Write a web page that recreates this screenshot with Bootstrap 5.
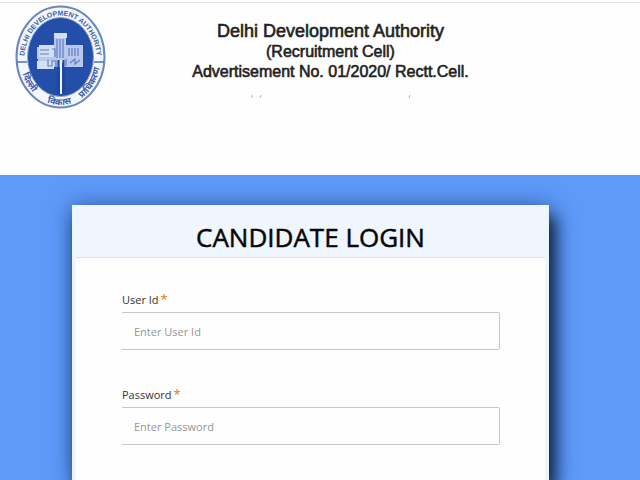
<!DOCTYPE html>
<html lang="en">
<head>
<meta charset="utf-8">
<meta name="viewport" content="width=device-width, initial-scale=1">
<title>Candidate Login</title>
<link href="https://cdn.jsdelivr.net/npm/bootstrap@5.3.0/dist/css/bootstrap.min.css" rel="stylesheet">
<style>
  body { font-family: "Open Sans", "Noto Sans", sans-serif; background: #fefefe; }
  .site-head { min-height: 173px; border-top: 1px solid #e2e4e2; margin-top: 2px; padding: 2px 85px 0 14px; }
  .emblem { width: 92px; height: 104px; }
  .org { font-family: "Liberation Sans", Arial, sans-serif; color: #222; padding-top: 15px; -webkit-text-stroke: 0.6px #222; }
  .org h1, .org h2, .org p { font-weight: 400; font-size: 16px; line-height: 20px; }
  .org h1 { font-size: 18px; line-height: 22px; }
  .ticks { width: 160px; height: 4px; margin-top: 13px; }
  .stage { background: #5e9af8; padding: 30px 91px 0 72px; min-height: calc(100vh - 175px); overflow: hidden; }
  .panel { background: #fefefe; border: solid #eaf7ff; border-width: 0 4px; min-height: 275px;
    box-shadow: 6px 12px 16px 0 #0d1d3c, 0 0 22px rgba(30, 70, 140, .6); }
  .panel-title { background: #eff6fe; border-bottom: 1px solid #dbe3ee; height: 53px; }
  .panel-title h2 { font-size: 26px; line-height: 38px; font-weight: 400; color: #080808; padding-top: 13px; -webkit-text-stroke: 0.5px #080808; }
  .fields { padding: 32px 45px 0 46px; }
  .fields label { font-size: 11px; line-height: 18px; color: #333; margin-bottom: 3px; }
  .star { color: #ec8a45; font-size: 13px; font-weight: 600; margin-left: 2px; }
  .fields .form-control { height: 38px; border: 1px solid #c9c6c7; border-left: 0; border-radius: 0 2px 2px 0;
    padding: 6px 12px; font-size: 11px; background: #fefefe; }
  .fields .form-control::placeholder { color: #969696; }
  .field + .field { margin-top: 35px; }
</style>
<script src="https://cdn.jsdelivr.net/npm/bootstrap@5.3.0/dist/js/bootstrap.bundle.min.js" defer></script>
</head>
<body>
<header class="site-head d-flex align-items-start">
  <svg class="emblem flex-shrink-0" viewBox="0 0 92 104" role="img" aria-label="Delhi Development Authority emblem">
    <defs>
      <path id="arcTop" d="M10 56A36.500 45.500 0 0 1 83 56"/>
      <path id="arcBottom" d="M6.500 54A40 46 0 0 0 86.500 54"/>
    </defs>
    <ellipse cx="46.500" cy="52" rx="44" ry="50.500" fill="#f3f6fd" stroke="#6a86be" stroke-width="2"/>
    <ellipse cx="46.500" cy="52" rx="33" ry="39.500" fill="#234fa8" stroke="#8ea5d5" stroke-width="1"/>
    <path d="M3 57h10M80 57h10" stroke="#5273b5" stroke-width="1.500"/>
    <g fill="#b9c8ea">
      <path d="M40 29h12v11h17v22H49v-4H46v4H24V54h-1V42h17z"/>
      <path d="M25 40h15v12H25zM23 56h17v8H23zM40 28h13v5H40z" fill="#d5dff4"/>
    </g>
    <path d="M43 34v19M46 34v19M49 34v19M55 43v8M58 43v8M61 43v8M64 43v8M26 45h9M26 49h9M38 44h3v8M34 55v6h4v-5h4v6M52 54v7M56 58l5-4v5l5-4" fill="none" stroke="#5f7fc5" stroke-width="1.200"/>
    <path d="M44.500 55v34M49.500 55v34" stroke="#1b469f" stroke-width="2"/>
    <path d="M47 55v34" stroke="#eef2fc" stroke-width="2"/>
    <g fill="#3b5ea9" font-weight="700" text-anchor="middle">
      <text font-family="Liberation Sans, Arial, sans-serif" font-size="7"><textPath href="#arcTop" startOffset="50%">DELHI DEVELOPMENT AUTHORITY</textPath></text>
      <g font-family="Noto Sans Devanagari, Noto Sans, sans-serif" font-size="9">
        <text><textPath href="#arcBottom" startOffset="19%">दिल्ली</textPath></text>
        <text><textPath href="#arcBottom" startOffset="49%">विकास</textPath></text>
        <text><textPath href="#arcBottom" startOffset="80%">प्राधिकरण</textPath></text>
      </g>
    </g>
  </svg>
  <div class="org flex-grow-1 text-center">
    <h1 class="m-0">Delhi Development Authority</h1>
    <h2 class="m-0">(Recruitment Cell)</h2>
    <p class="m-0">Advertisement No. 01/2020/ Rectt.Cell.</p>
    <svg class="ticks d-block mx-auto" viewBox="0 0 160 4" aria-hidden="true"><path d="M1 0v3M10 0l-1 3M159 0l-1 3" stroke="#b5b5b8"/></svg>
  </div>
</header>
<main class="stage">
  <form class="panel">
    <div class="panel-title text-center"><h2 class="m-0">CANDIDATE LOGIN</h2></div>
    <div class="fields">
      <div class="field">
        <label class="d-block" for="userId">User Id<span class="star">*</span></label>
        <input class="form-control" id="userId" type="text" placeholder="Enter User Id">
      </div>
      <div class="field">
        <label class="d-block" for="password">Password<span class="star">*</span></label>
        <input class="form-control" id="password" type="password" placeholder="Enter Password">
      </div>
    </div>
  </form>
</main>
</body>
</html>
